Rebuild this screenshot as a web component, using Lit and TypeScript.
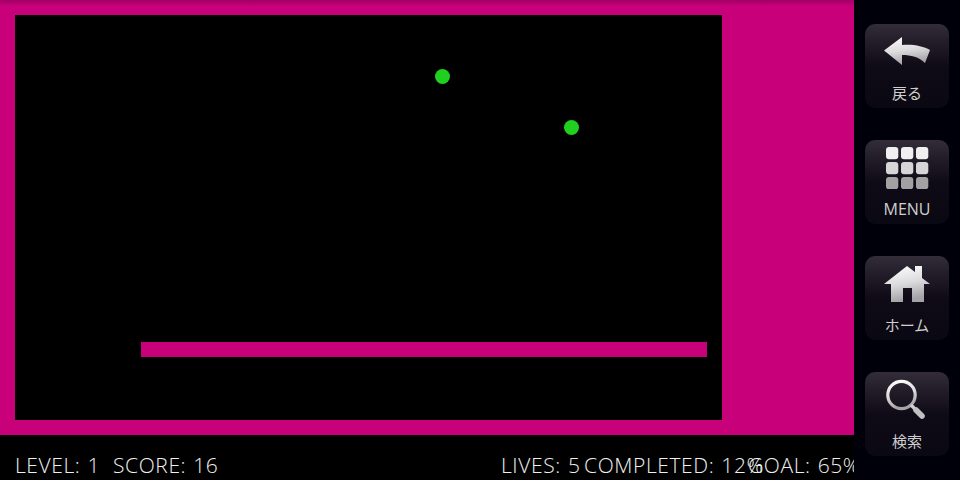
import { LitElement, html, css, svg } from "lit";
import { customElement } from "lit/decorators.js";

const defs = svg`<defs>
  <linearGradient id="metal" x1="0" y1="0" x2="0.25" y2="1">
    <stop offset="0" stop-color="#ffffff"/>
    <stop offset="0.55" stop-color="#dcdcde"/>
    <stop offset="1" stop-color="#a4a4a8"/>
  </linearGradient>
</defs>`;

const back = html`<svg class="icon" viewBox="0 0 60 44">${defs}
  <path d="M7 21.5 L25 8 L25 16 C36 15 46 17 53 21 L48 34 C42 28 34 26 25 26 L25 36 Z" fill="url(#metal)"/>
</svg>`;

const rowFill = ["#f0f0f0", "#d6d6d6", "#a2a2a2"];
const grid = html`<svg class="icon" viewBox="0 0 60 44">
  ${[0, 1, 2].flatMap((r) =>
    [0, 1, 2].map(
      (c) => svg`<rect x="${9 + c * 15}" y="${2 + r * 15}" width="12.3" height="12.3" rx="3" fill="${rowFill[r]}"/>`
    )
  )}
</svg>`;

const home = html`<svg class="icon" viewBox="0 0 60 44">${defs}
  <path d="M7 23 L30 5 L38 11 L38 5 L45 5 L45 17 L53 23 L47 23 L47 41 L35 41 L35 27 L26 27 L26 41 L14 41 L14 23 Z" fill="url(#metal)"/>
</svg>`;

const search = html`<svg class="icon" viewBox="0 0 60 44">${defs}
  <circle cx="24.5" cy="18" r="13.7" fill="none" stroke="url(#metal)" stroke-width="3.2"/>
  <path d="M34 28 L39 33" stroke="#d0d0d2" stroke-width="3.4"/>
  <path d="M39 33 L45 39" stroke="#c0c0c2" stroke-width="5.6" stroke-linecap="round"/>
</svg>`;

@customElement("app-root")
export class AppRoot extends LitElement {
  static styles = css`
    :host { display: block; width: 960px; height: 480px; background: #000; overflow: hidden; }
    .page { display: grid; grid-template-columns: 854px 106px; height: 480px; }
    .main { display: flex; flex-direction: column; min-width: 0; overflow: hidden; }
    .wall {
      height: 435px; box-sizing: border-box; padding: 15px 132px 15px 15px;
      background: linear-gradient(#a00064 0, #b4006f 3px, #c8007a 6px);
    }
    .field { position: relative; height: 405px; background: #000; }
    .paddle { position: absolute; left: 126px; top: 327px; width: 566px; height: 15px; background: #c8007a; }
    .ball { position: absolute; width: 15px; height: 15px; border-radius: 50%; background: #1fd01f; }
    .b1 { left: 419.5px; top: 54px; }
    .b2 { left: 548.5px; top: 105px; }
    .status {
      display: grid; grid-template-columns: 98px 388px 83px 164px 1fr;
      padding: 18px 0 0 15px; color: #f0f0f0;
      font: 300 21px/25px "Open Sans", "Liberation Sans", sans-serif;
      letter-spacing: 0.6px;
      word-spacing: 1px;
      white-space: nowrap;
    }
    .side { display: flex; flex-direction: column; gap: 32px; padding: 24px 11px 0 11px; background: #00000a; }
    .btn {
      height: 84px; border-radius: 10px; display: flex; flex-direction: column; align-items: center;
      background: linear-gradient(#332d3a 0, #241e2b 20%, #0f0b16 50%, #0a0812 100%);
    }
    .icon { width: 60px; height: 44px; margin-top: 5px; display: block; flex: none; }
    .label {
      margin-top: 10px; color: #cfcfcf; font: 400 15px/20px "Noto Sans CJK JP", "Liberation Sans", sans-serif;
    }
    .latin { font: 400 16px/20px "Open Sans", "Liberation Sans", sans-serif; }
  `;

  render() {
    return html`<div class="page">
      <div class="main">
        <div class="wall">
          <div class="field">
            <div class="paddle"></div>
            <div class="ball b1"></div>
            <div class="ball b2"></div>
          </div>
        </div>
        <div class="status">
          <span>LEVEL: 1</span>
          <span>SCORE: 16</span>
          <span>LIVES: 5</span>
          <span>COMPLETED: 12%</span>
          <span>GOAL: 65%</span>
        </div>
      </div>
      <div class="side">
        <div class="btn">${back}<span class="label">戻る</span></div>
        <div class="btn">${grid}<span class="label latin">MENU</span></div>
        <div class="btn">${home}<span class="label">ホーム</span></div>
        <div class="btn">${search}<span class="label">検索</span></div>
      </div>
    </div>`;
  }
}
